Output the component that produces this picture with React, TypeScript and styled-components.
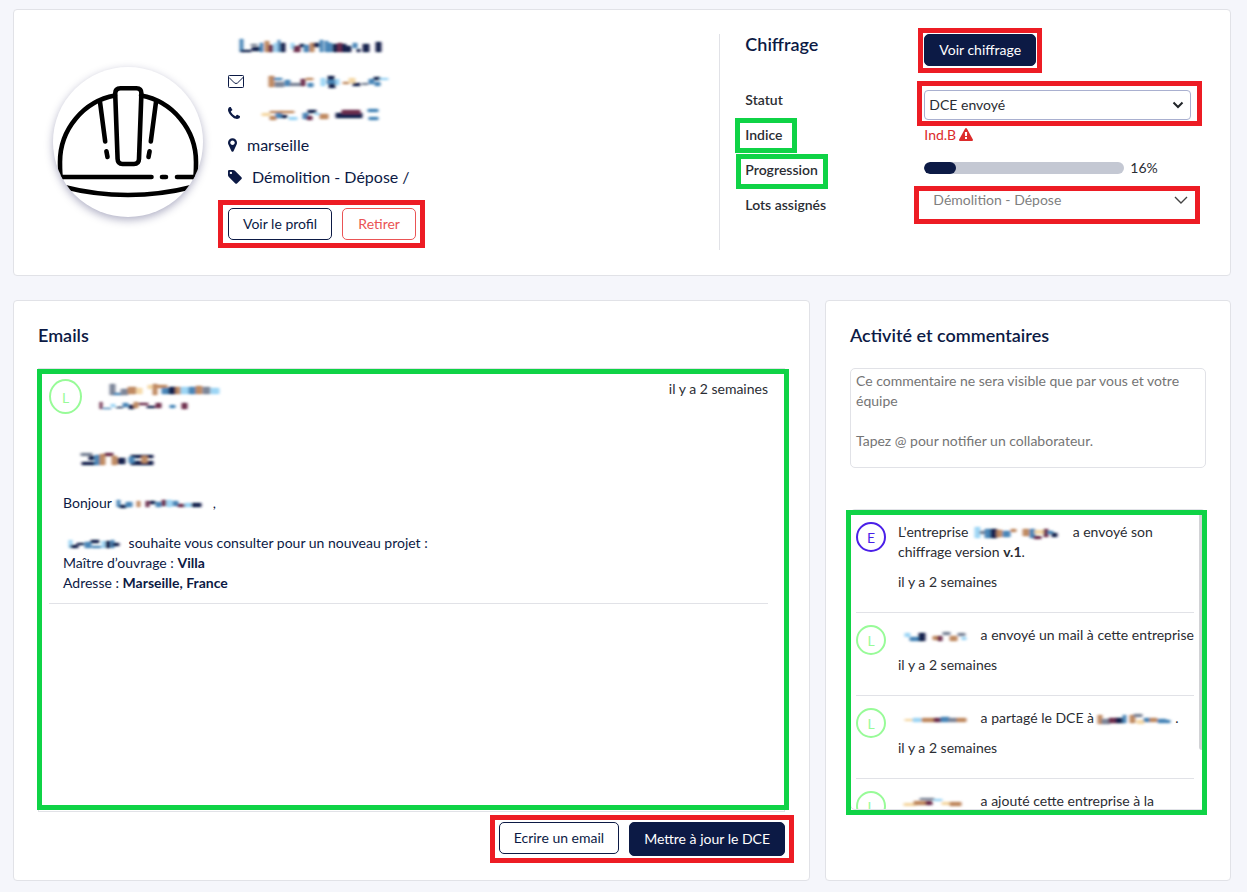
import React from "react";
import styled, { createGlobalStyle, css } from "styled-components";

const navy = "#0c1a45";
const text = "#2b2d33";
const line = "#e1e2e7";
const red = "#ed1c24";
const green = "#0fd346";

const GlobalStyle = createGlobalStyle`
  *, *::before, *::after { box-sizing: border-box; }
  body {
    margin: 0;
    background: #f5f6fb;
    color: ${text};
    font-family: Lato, "Liberation Sans", sans-serif;
    font-size: 14px;
    line-height: 20px;
  }
  button, select, textarea { font: inherit; }
`;

const Page = styled.main`
  display: grid;
  grid-template-columns: minmax(0, 1fr) 406px;
  gap: 24px 15px;
  padding: 9px 16px 11px 13px;
`;

const Card = styled.section`
  display: flex;
  flex-direction: column;
  min-width: 0;
  padding: 24px;
  background: #fff;
  border: 1px solid ${line};
  border-radius: 4px;
`;

const CompanyCard = styled(Card)`
  grid-column: 1 / -1;
  display: grid;
  grid-template-columns: 7fr 5fr;
  padding-bottom: 25px;
`;

const Title = styled.h2`
  margin: 0;
  color: ${navy};
  font-size: 18px;
  font-weight: 600;
  line-height: 20px;
`;

/* Coloured highlight drawn over a region; inset gives its distance from the region's edges. */
const Highlight = styled.div<{ $color: string; $inset: string }>`
  position: relative;
  &::after {
    content: "";
    position: absolute;
    inset: ${(p) => p.$inset};
    border: 5px solid ${(p) => p.$color};
    pointer-events: none;
  }
`;

const Button = styled.button<{ $tone: "solid" | "outline" | "danger"; $tall?: boolean }>`
  height: ${(p) => (p.$tall ? 34 : 32)}px;
  min-width: 74px;
  padding: 0 14px;
  border: 1px solid ${navy};
  border-radius: 5px;
  white-space: nowrap;
  cursor: pointer;
  ${(p) =>
    p.$tone === "solid"
      ? css`background: ${navy}; color: #fff;`
      : p.$tone === "outline"
        ? css`background: #fff; color: ${navy};`
        : css`background: #fff; color: #ea5455; border-color: #ea5455;`}
`;

/* Company identity */

const Identity = styled.div`
  display: flex;
  align-items: center;
  gap: 25px;
  padding-left: 15px;
`;

const Logo = styled.div`
  flex: none;
  width: 150px;
  height: 150px;
  overflow: hidden;
  border-radius: 50%;
  background: #fff;
  box-shadow: 0 3px 8px rgba(30, 30, 90, 0.35);
  svg { display: block; }
`;

const Details = styled.div`
  align-self: start;
  padding-bottom: 10px;
  color: ${navy};
  font-size: 16px;
`;

const CompanyName = styled.div`
  height: 24px;
  margin-bottom: 7px;
  padding-left: 12px;
`;

const DetailRow = styled.div`
  display: flex;
  align-items: center;
  gap: 10px;
  height: 32px;
  svg { flex: none; }
`;

const ButtonPair = styled(Highlight)`
  display: flex;
  align-items: flex-start;
  gap: 10px;
  width: fit-content;
`;

const IdentityActions = styled(ButtonPair)`
  margin-top: 15px;
  font-size: 14px;
`;

/* Quotation panel */

const Quote = styled.div`
  display: grid;
  grid-template-columns: 179px minmax(0, 1fr);
  grid-template-rows: 48px;
  grid-auto-rows: 35px;
  align-items: center;
  padding-left: 25px;
  border-left: 1px solid ${line};
  > :nth-child(-n + 2) { align-self: start; }
`;

const FieldName = styled.label`
  font-weight: 600;
`;

const Fit = styled(Highlight)`
  width: fit-content;
`;

const SelectBox = styled(Highlight)`
  width: 267px;
  margin-top: 10px;
  svg {
    position: absolute;
    right: 7px;
    top: 11px;
    pointer-events: none;
  }
`;

const StatusSelect = styled.select`
  display: block;
  width: 100%;
  height: 30px;
  padding: 0 4px;
  appearance: none;
  color: ${text};
  background: #fff;
  border: 1px solid #a9b0d0;
  border-radius: 4px;
`;

const LotBox = styled(SelectBox)`
  align-self: start;
  margin-top: 0;
  svg { right: 3px; top: 9px; }
`;

const LotSelect = styled(StatusSelect)`
  height: 26px;
  padding: 0 9px;
  color: #808080;
  border: 0;
`;

const Alert = styled.div`
  display: flex;
  align-items: center;
  gap: 3px;
  color: #dc2b2b;
`;

const ProgressRow = styled.div`
  display: flex;
  align-items: center;
  gap: 6px;
  padding-bottom: 3px;
`;

const Track = styled.div`
  width: 200px;
  height: 12px;
  overflow: hidden;
  border-radius: 6px;
  background: #c4c8d3;
`;

const Bar = styled.div`
  height: 100%;
  border-radius: 6px;
  background: ${navy};
`;

/* Emails */

const MailBox = styled(Highlight)`
  height: 444px;
  margin: 23px 0 10px;
  padding: 10px 16px 10px 10px;
  border: 1px solid ${line};
`;

const Mail = styled.article`
  border-bottom: 1px solid ${line};
  color: ${navy};
`;

const MailHead = styled.header`
  display: flex;
  align-items: flex-start;
  gap: 16px;
  height: 60px;
`;

const Sender = styled.div`
  flex: 1;
  display: flex;
  flex-direction: column;
`;

const Time = styled.time`
  color: ${text};
`;

const MailBody = styled.div`
  padding: 0 14px 10px;
  p { margin: 0 0 20px; }
  p:last-child { margin: 0; }
`;

const Subject = styled.div`
  height: 54px;
  padding: 10px 0 0 18px;
`;

const MailActions = styled(ButtonPair)`
  align-self: flex-end;
`;

const Avatar = styled.span<{ $color: string; $large?: boolean }>`
  flex: none;
  display: flex;
  align-items: center;
  justify-content: center;
  width: ${(p) => (p.$large ? 33 : 30)}px;
  height: ${(p) => (p.$large ? 35 : 30)}px;
  padding-top: 2px;
  border: 2px solid ${(p) => p.$color};
  border-radius: 50%;
  color: ${(p) => p.$color};
`;

/* Activity */

const Comment = styled.textarea`
  display: block;
  width: 100%;
  height: 100px;
  margin: 23px 0 41px;
  padding: 2px 5px;
  resize: none;
  border: 1px solid ${line};
  border-radius: 5px;
  &::placeholder { color: #757575; opacity: 1; }
`;

const Feed = styled(Highlight)`
  border: 1px solid ${line};
  border-radius: 5px;
`;

const FeedList = styled.ul`
  height: 299px;
  margin: 0;
  padding: 0 11px 0 5px;
  list-style: none;
  overflow-y: auto;
  scrollbar-width: none;
`;

const FeedItem = styled.li`
  display: flex;
  gap: 12px;
  padding: 12px 0 20px;
  border-bottom: 1px solid ${line};
  white-space: nowrap;
  p { margin: 0 0 10px; }
`;

const Thumb = styled.div`
  position: absolute;
  top: 0;
  right: 0;
  width: 6px;
  height: 240px;
  border-radius: 3px;
  background: #d2d3d6;
`;

/* Masked names: soft coloured strokes in place of the private text. */

type Stroke = [x: number, y: number, w: number, h: number, color: string];

const SmudgeSvg = styled.svg`
  vertical-align: middle;
  overflow: visible;
`;

function Smudge({ width, height = 14, strokes }: { width: number; height?: number; strokes: Stroke[] }) {
  const id = React.useId();
  return (
    <SmudgeSvg width={width} height={height} viewBox={`0 0 ${width} ${height}`} aria-hidden="true">
      <filter id={id} x="-10%" y="-40%" width="120%" height="180%">
        <feGaussianBlur stdDeviation="1.8 0.9" />
      </filter>
      <g filter={`url(#${id})`}>
        {strokes.map(([x, y, w, h, color], i) => (
          <rect key={i} x={x - 0.5} y={y - 0.3} width={w + 1} height={h + 0.6} rx="1" fill={color} />
        ))}
      </g>
    </SmudgeSvg>
  );
}

const N = "#17224e";
const B = "#4a86b8";
const S = "#9ed6f5";
const R = "#6d2f4d";
const O = "#c08a62";
const Y = "#f5d9a8";
const G = "#7d8699";

const marks: Record<string, Stroke[]> = {
  company: [
    [0, 0, 3, 13, B], [1, 11, 10, 2, N], [11, 5, 6, 2, G], [12, 8, 8, 4, N], [20, 4, 3, 9, B],
    [25, 2, 4, 11, O], [29, 6, 4, 7, R], [34, 4, 3, 9, S], [38, 1, 2, 12, B], [41, 4, 4, 9, N],
    [51, 4, 3, 6, S], [54, 7, 6, 6, R], [60, 5, 4, 3, N], [64, 6, 5, 7, B], [70, 4, 4, 9, O],
    [74, 4, 5, 4, N], [80, 1, 3, 12, B], [85, 2, 3, 11, B], [88, 4, 4, 9, B], [93, 5, 5, 8, N],
    [98, 4, 4, 9, R], [102, 5, 4, 8, N], [106, 7, 5, 6, N], [113, 4, 4, 5, B], [117, 10, 3, 3, N],
    [123, 5, 6, 8, N], [136, 3, 5, 10, N],
  ],
  mail: [
    [1, 1, 5, 11, O], [6, 3, 8, 2, B], [7, 7, 9, 5, G], [17, 5, 5, 6, B], [22, 8, 11, 3, G],
    [33, 4, 4, 7, R], [38, 3, 7, 2, O], [40, 8, 5, 4, B], [53, 3, 4, 8, S], [60, 1, 6, 4, N],
    [59, 5, 9, 4, B], [61, 9, 6, 4, N], [68, 4, 3, 6, S], [75, 7, 6, 2, O], [81, 3, 6, 5, Y],
    [85, 8, 7, 3, N], [94, 8, 6, 2, G], [101, 4, 5, 5, B], [106, 2, 6, 3, N], [107, 7, 5, 4, B],
    [112, 3, 8, 2, S],
  ],
  phone: [
    [0, 5, 8, 3, Y], [8, 3, 12, 2, O], [8, 8, 6, 4, O], [14, 5, 6, 5, B], [18, 3, 14, 2, O],
    [20, 7, 5, 3, N], [27, 9, 8, 3, S], [41, 5, 5, 6, B], [45, 8, 5, 4, R], [46, 2, 8, 3, N],
    [53, 5, 5, 2, S], [58, 6, 8, 5, O], [74, 5, 26, 5, N], [80, 2, 18, 4, R], [106, 1, 10, 3, B],
    [107, 9, 9, 3, B],
  ],
  sender: [
    [0, 0, 5, 11, G], [4, 9, 8, 2, B], [11, 5, 7, 6, G], [18, 3, 8, 7, O], [27, 4, 5, 6, Y],
    [38, 1, 4, 4, Y], [43, 0, 4, 11, O], [47, 1, 10, 3, O], [52, 4, 7, 6, B], [59, 3, 7, 7, N],
    [66, 3, 5, 7, O], [71, 3, 8, 7, S], [79, 3, 7, 7, B], [86, 2, 6, 8, O], [93, 3, 7, 7, G],
    [101, 4, 8, 6, S],
  ],
  address: [
    [0, 0, 2, 7, R], [3, 6, 8, 1, B], [11, 2, 4, 3, S], [16, 5, 7, 1, N], [23, 1, 5, 4, B],
    [29, 3, 5, 4, N], [34, 0, 4, 6, O], [39, 1, 9, 2, R], [47, 4, 8, 2, N], [56, 1, 5, 5, R],
    [70, 3, 5, 3, B], [82, 1, 5, 6, R],
  ],
  subject: [
    [0, 0, 11, 3, G], [8, 3, 5, 4, N], [1, 9, 13, 3, N], [14, 2, 5, 10, B], [19, 1, 5, 11, O],
    [24, 0, 8, 3, R], [31, 3, 5, 9, O], [37, 5, 7, 6, N], [50, 2, 22, 3, N], [50, 8, 22, 4, N],
    [48, 4, 5, 6, B], [61, 3, 5, 7, O],
  ],
  greeting: [
    [0, 0, 3, 7, B], [3, 5, 6, 3, N], [9, 2, 6, 5, B], [20, 1, 3, 6, O], [29, 1, 3, 6, R],
    [33, 1, 5, 3, N], [39, 2, 5, 5, B], [45, 0, 4, 6, R], [50, 0, 5, 7, S], [56, 1, 5, 5, B],
    [61, 4, 7, 3, R], [68, 3, 6, 4, S], [75, 3, 9, 4, N],
  ],
  agency: [
    [0, 1, 3, 8, S], [2, 6, 7, 3, N], [8, 4, 7, 2, N], [16, 3, 6, 6, B], [22, 1, 8, 3, N],
    [23, 7, 9, 2, B], [33, 2, 3, 7, S], [37, 2, 4, 7, N], [42, 1, 3, 8, B], [44, 4, 6, 3, N],
  ],
  feedCompany: [
    [0, 0, 5, 11, S], [5, 4, 5, 3, G], [10, 2, 6, 9, B], [16, 2, 6, 9, N], [22, 3, 5, 7, O],
    [28, 4, 7, 6, B], [36, 2, 5, 3, O], [48, 2, 6, 7, O], [55, 2, 5, 9, B], [59, 9, 7, 3, R],
    [60, 3, 9, 4, Y], [69, 2, 4, 8, R], [73, 4, 5, 3, B], [77, 6, 5, 4, N],
  ],
  userA: [
    [0, 2, 5, 4, S], [5, 6, 10, 4, B], [14, 2, 6, 8, N], [28, 5, 5, 4, O], [33, 5, 4, 5, R],
    [38, 1, 7, 3, G], [45, 5, 7, 5, O], [53, 2, 7, 3, G], [57, 6, 4, 3, S],
  ],
  userB: [
    [0, 5, 8, 2, Y], [8, 4, 8, 4, S], [17, 4, 12, 4, O], [29, 4, 7, 4, R], [36, 3, 8, 5, B],
    [44, 4, 8, 4, G], [52, 4, 9, 4, O],
  ],
  userC: [
    [0, 6, 12, 3, Y], [10, 4, 12, 4, O], [16, 1, 14, 2, G], [22, 4, 6, 4, R], [30, 2, 8, 2, S],
    [38, 5, 8, 3, Y], [46, 5, 11, 4, O],
  ],
  partner: [
    [0, 1, 4, 9, O], [4, 5, 8, 5, G], [11, 4, 8, 5, R], [18, 4, 8, 5, N], [25, 1, 3, 8, B],
    [32, 1, 5, 8, O], [36, 0, 8, 3, G], [39, 6, 7, 4, Y], [46, 4, 6, 4, B], [52, 4, 7, 4, O],
    [60, 5, 8, 4, B], [68, 6, 4, 3, B],
  ],
};

const shift = (strokes: Stroke[], dx: number, dy = 0): Stroke[] =>
  strokes.map(([x, y, w, h, color]) => [x + dx, y + dy, w, h, color]);

/* Icons */

function EnvelopeIcon() {
  return (
    <svg width="16" height="13" viewBox="0 0 16 13" fill="none" stroke={navy} aria-hidden="true">
      <rect x="0.5" y="0.5" width="15" height="12" rx="0.8" />
      <path d="M1 2.5 6.4 7.9Q8 9.2 9.6 7.9L15 2.5" />
    </svg>
  );
}

function Glyph({ box, width, height, d }: { box: string; width: number; height: number; d: string }) {
  return (
    <svg width={width} height={height} viewBox={box} fill="currentColor" aria-hidden="true">
      <path d={d} />
    </svg>
  );
}

const phonePath =
  "M1408 1240q0 27-10 70.5t-21 68.5q-21 50-122 106-94 51-186 51-27 0-53-3.5t-57.5-12.5-47-14.5-55.5-20.5-49-18q-98-35-175-83-127-79-264-216t-216-264q-48-77-83-175-3-9-18-49t-20.5-55.5-14.5-47-12.5-57.5-3.5-53q0-92 51-186 56-101 106-122 25-11 68.5-21t70.5-10q14 0 21 3 18 6 53 76 11 19 30 54t35 63.5 31 53.5q3 4 17.5 25t21.5 35.5 7 28.5q0 20-28.5 50t-62 55-62 53-28.5 46q0 9 5 22.5t8.5 20.5 14 24 11.5 19q76 137 174 235t235 174q2 1 19 11.5t24 14 20.5 8.5 22.5 5q18 0 46-28.5t53-62 55-62 50-28.5q14 0 28.5 7t35.5 21.5 25 17.5q25 15 53.5 31t63.5 35 54 30q70 35 76 53 3 7 3 21z";
const markerPath =
  "M1152 640q0-106-75-181t-181-75-181 75-75 181 75 181 181 75 181-75 75-181zm256 0q0 109-33 179l-364 774q-16 33-47.5 52t-67.5 19-67.5-19-46.5-52l-365-774q-33-70-33-179 0-212 150-362t362-150 362 150 150 362z";
const tagPath =
  "M576 448q0-53-37.5-90.5t-90.5-37.5-90.5 37.5-37.5 90.5 37.5 90.5 90.5 37.5 90.5-37.5 37.5-90.5zm1067 576q0 53-37 90l-491 492q-39 37-91 37-53 0-90-37l-715-716q-38-37-64.5-101t-26.5-117v-416q0-52 38-90t90-38h416q53 0 117 26.5t102 64.5l715 714q37 39 37 91z";
const warningPath =
  "M1024 1375v-190q0-14-9.5-23.5t-22.5-9.5h-192q-13 0-22.5 9.5t-9.5 23.5v190q0 14 9.5 23.5t22.5 9.5h192q13 0 22.5-9.5t9.5-23.5zm-2-374l18-459q0-12-10-19-13-11-24-11h-220q-11 0-24 11-10 7-10 21l17 457q0 10 10 16.5t24 6.5h185q14 0 23.5-6.5t10.5-16.5zm-14-934l768 1408q35 63-2 126-17 29-46.5 46t-63.5 17h-1536q-34 0-63.5-17t-46.5-46q-37-63-2-126l768-1408q17-31 47-49t65-18 65 18 47 49z";

function Helmet() {
  return (
    <svg width="150" height="150" viewBox="0 0 150 150" fill="none" stroke="#000" strokeWidth="4.6" strokeLinecap="round" role="img" aria-label="Casque de chantier">
      <path d="M8 112C7 108 7 101 7 95C7 62 31 34 62 28.500" />
      <path d="M142 112C143 108 143 101 143 95C143 62 119 34 88 28.500" />
      <path d="M67.500 21.300H83.500Q88.500 21.300 88.400 26.500L86 92Q85.800 97 81 97H69.500Q64.800 97 64.600 92L62.200 26.500Q62.200 21.300 67.500 21.300Z" />
      <path d="M47 35 52.200 74.500M53.400 84.300 54.500 90M103 35 97.800 74.500M96.600 84.300 95.500 90" />
      <path d="M8 110H98.500M109 110H113M124 110H142" />
      <path d="M9 119.500Q75 136.500 141 119.500" />
    </svg>
  );
}

function Chevron({ bold }: { bold?: boolean }) {
  return bold ? (
    <svg width="12" height="8" viewBox="0 0 12 8" fill="none" stroke="#212529" strokeWidth="2" aria-hidden="true">
      <path d="M1.500 1.500 6 6 10.500 1.500" />
    </svg>
  ) : (
    <svg width="14" height="8" viewBox="0 0 14 8" fill="none" stroke="#444" strokeWidth="1.400" aria-hidden="true">
      <path d="M1 1 7 7 13 1" />
    </svg>
  );
}

const pale = "#98fb98";

export default function App() {
  return (
    <>
      <GlobalStyle />
      <Page>
        <CompanyCard>
          <Identity>
            <Logo><Helmet /></Logo>
            <Details>
              <CompanyName><Smudge width={142} strokes={marks.company} /></CompanyName>
              <DetailRow>
                <EnvelopeIcon />
                <Smudge width={135} height={13} strokes={shift(marks.mail, 14)} />
              </DetailRow>
              <DetailRow>
                <Glyph box="0 128 1408 1408" width={12} height={12} d={phonePath} />
                <Smudge width={128} height={10} strokes={shift(marks.phone, 12)} />
              </DetailRow>
              <DetailRow>
                <Glyph box="384 128 1024 1536" width={9} height={14} d={markerPath} />
                marseille
              </DetailRow>
              <DetailRow>
                <Glyph box="128 128 1536 1536" width={14} height={14} d={tagPath} />
                Démolition - Dépose /
              </DetailRow>
              <IdentityActions $color={red} $inset="-8px -9px -8px -10px">
                <Button $tone="outline">Voir le profil</Button>
                <Button $tone="danger">Retirer</Button>
              </IdentityActions>
            </Details>
          </Identity>

          <Quote>
            <Title>Chiffrage</Title>
            <Fit $color={red} $inset="-6px -6px -7px -6px">
              <Button $tone="solid">Voir chiffrage</Button>
            </Fit>
            <FieldName htmlFor="statut">Statut</FieldName>
            <SelectBox $color={red} $inset="-9px -11px -6px -7px">
              <StatusSelect id="statut"><option>DCE envoyé</option></StatusSelect>
              <Chevron bold />
            </SelectBox>
            <Fit $color={green} $inset="-7px -14px -8px -10px">
              <FieldName as="span">Indice</FieldName>
            </Fit>
            <Alert>
              Ind.B
              <Glyph box="0 0 1792 1664" width={14} height={13} d={warningPath} />
            </Alert>
            <Fit $color={green} $inset="-6px -10px -9px -9px">
              <FieldName as="span" id="progression">Progression</FieldName>
            </Fit>
            <ProgressRow>
              <Track role="progressbar" aria-labelledby="progression" aria-valuenow={16}>
                <Bar style={{ width: "16%" }} />
              </Track>
              16%
            </ProgressRow>
            <FieldName htmlFor="lots">Lots assignés</FieldName>
            <LotBox $color={red} $inset="-1px -9px -11px -10px">
              <LotSelect id="lots"><option>Démolition - Dépose</option></LotSelect>
              <Chevron />
            </LotBox>
          </Quote>
        </CompanyCard>

        <Card>
          <Title>Emails</Title>
          <MailBox $color={green} $inset="0 -5px 1px -2px">
            <Mail>
              <MailHead>
                <Avatar $color={pale} $large>L</Avatar>
                <Sender>
                  <Smudge width={122} height={16} strokes={shift(marks.sender, 12, 5)} />
                  <Smudge width={90} height={16} strokes={shift(marks.address, 2, 7)} />
                </Sender>
                <Time>il y a 2 semaines</Time>
              </MailHead>
              <MailBody>
                <Subject><Smudge width={74} strokes={marks.subject} /></Subject>
                <p>
                  Bonjour <Smudge width={94} height={8} strokes={shift(marks.greeting, 2)} /> ,
                </p>
                <p>
                  <Smudge width={62} height={10} strokes={shift(marks.agency, 6)} />{" "}
                  souhaite vous consulter pour un nouveau projet :<br />
                  Maître d’ouvrage : <b>Villa</b><br />
                  Adresse : <b>Marseille, France</b>
                </p>
              </MailBody>
            </Mail>
          </MailBox>
          <MailActions $color={red} $inset="-7px -9px -7px -9px">
            <Button $tone="outline">Ecrire un email</Button>
            <Button $tone="solid" $tall>Mettre à jour le DCE</Button>
          </MailActions>
        </Card>

        <Card>
          <Title>Activité et commentaires</Title>
          <Comment
            aria-label="Commentaire"
            placeholder={"Ce commentaire ne sera visible que par vous et votre équipe\n\nTapez @ pour notifier un collaborateur."}
          />
          <Feed $color={green} $inset="0 -2px -6px -5px">
            <FeedList>
              <FeedItem>
                <Avatar $color="#4a1fe8">E</Avatar>
                <div>
                  <p>
                    L'entreprise <Smudge width={97} height={12} strokes={shift(marks.feedCompany, 3)} /> a envoyé son<br />
                    chiffrage version <b>v.1</b>.
                  </p>
                  <Time>il y a 2 semaines</Time>
                </div>
              </FeedItem>
              <FeedItem>
                <Avatar $color={pale}>L</Avatar>
                <div>
                  <p>
                    <Smudge width={79} height={11} strokes={shift(marks.userA, 7)} /> a envoyé un mail à cette entreprise
                  </p>
                  <Time>il y a 2 semaines</Time>
                </div>
              </FeedItem>
              <FeedItem>
                <Avatar $color={pale}>L</Avatar>
                <div>
                  <p>
                    <Smudge width={79} height={10} strokes={shift(marks.userB, 7)} /> a partagé le DCE à{" "}
                    <Smudge width={74} height={10} strokes={marks.partner} /> .
                  </p>
                  <Time>il y a 2 semaines</Time>
                </div>
              </FeedItem>
              <FeedItem>
                <Avatar $color={pale}>L</Avatar>
                <div>
                  <p>
                    <Smudge width={79} height={10} strokes={shift(marks.userC, 6)} /> a ajouté cette entreprise à la
                  </p>
                </div>
              </FeedItem>
            </FeedList>
            <Thumb />
          </Feed>
        </Card>
      </Page>
    </>
  );
}
